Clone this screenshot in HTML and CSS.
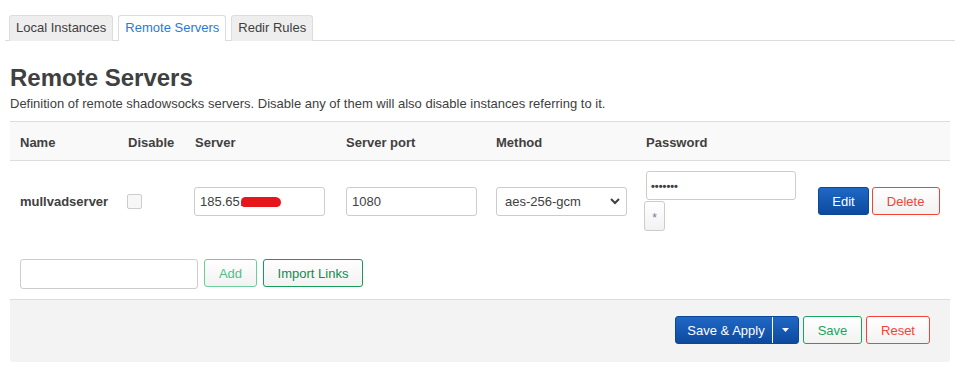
FILE: index.html
```html
<!DOCTYPE html>
<html lang="en">
<head>
    <meta charset="UTF-8">
    <title>Remote Servers</title>
    <link rel="stylesheet" href="styles.css">
</head>
<body>
    <div class="main">
        <ul class="tabs">
            <li class="tab">Local Instances</li>
            <li class="tab active">Remote Servers</li>
            <li class="tab">Redir Rules</li>
        </ul>

        <div class="section">
            <h2 class="section-title">Remote Servers</h2>
            <p class="section-descr">Definition of remote shadowsocks servers. Disable any of them will also disable instances referring to it.</p>

            <table class="cbi-table">
                <colgroup>
                    <col style="width: 108px">
                    <col style="width: 67px">
                    <col style="width: 151px">
                    <col style="width: 150px">
                    <col style="width: 150px">
                    <col style="width: 171px">
                    <col>
                </colgroup>
                <thead>
                    <tr>
                        <th>Name</th>
                        <th>Disable</th>
                        <th>Server</th>
                        <th>Server port</th>
                        <th>Method</th>
                        <th>Password</th>
                        <th></th>
                    </tr>
                </thead>
                <tbody>
                    <tr>
                        <td class="name">mullvadserver</td>
                        <td><input type="checkbox" class="check"></td>
                        <td>
                            <div class="field">
                                <span>185.65.</span><span class="redact"></span>
                            </div>
                        </td>
                        <td><input type="text" class="text" value="1080"></td>
                        <td>
                            <select class="select">
                                <option>aes-256-gcm</option>
                            </select>
                        </td>
                        <td>
                            <div class="pw">
                                <input type="text" class="text pw-input" value="•••••••">
                                <button class="btn btn-reveal">*</button>
                            </div>
                        </td>
                        <td class="actions">
                            <button class="btn btn-edit">Edit</button>
                            <button class="btn btn-delete">Delete</button>
                        </td>
                    </tr>
                </tbody>
            </table>

            <div class="create">
                <input type="text" class="text create-input">
                <button class="btn btn-add">Add</button>
                <button class="btn btn-import">Import Links</button>
            </div>
        </div>

        <div class="page-actions">
            <div class="split">
                <button class="btn btn-apply">Save &amp; Apply</button>
                <button class="btn btn-caret">
                    <svg width="7" height="4" viewBox="0 0 7 4"><path d="M0 0h7L3.5 4z" fill="#fff"/></svg>
                </button>
            </div>
            <button class="btn btn-save">Save</button>
            <button class="btn btn-reset">Reset</button>
        </div>
    </div>
</body>
</html>
```

FILE: styles.css
```css
* {
    margin: 0;
    padding: 0;
    box-sizing: border-box;
}

body {
    background: #fff;
    font-family: "Liberation Sans", Arial, sans-serif;
    font-size: 13px;
    color: #404040;
}

.main {
    width: 940px;
    margin-left: 10px;
    padding-top: 15px;
}

/* tabs */
.tabs {
    list-style: none;
    display: flex;
    gap: 5px;
    margin: 0 -5px;
    padding-left: 4px;
    border-bottom: 1px solid #ddd;
}

.tab {
    height: 26px;
    padding: 0 6px;
    line-height: 24px;
    background: #eee;
    border: 1px solid #ddd;
    border-bottom: none;
    border-radius: 3px 3px 0 0;
    color: #404040;
    margin-bottom: -1px;
}

.tab.active {
    background: #fff;
    color: #2a7ad5;
}

/* section */
.section-title {
    font-size: 24px;
    font-weight: bold;
    color: #404040;
    margin-top: 24px;
    line-height: 26px;
}

.section-descr {
    font-size: 13px;
    margin-top: 4px;
    line-height: 17px;
}

.cbi-table {
    width: 100%;
    border-collapse: collapse;
    table-layout: fixed;
    margin-top: 9px;
}

.cbi-table th {
    background: #f9f9f9;
    border-top: 1px solid #ddd;
    border-bottom: 1px solid #ddd;
    height: 39px;
    padding: 2px 10px 0;
    text-align: left;
    font-weight: bold;
    color: #404040;
}

.cbi-table td {
    padding: 10px 10px;
    height: 80px;
    vertical-align: middle;
}

.cbi-table td.name {
    font-weight: bold;
}

.check {
    appearance: none;
    display: block;
    width: 15px;
    height: 15px;
    border: 1px solid #ccc;
    border-radius: 2px;
    background: #f7f7f7;
    margin-left: -1px;
}

.text,
.field,
.select {
    display: block;
    width: 131px;
    height: 29px;
    border: 1px solid #ccc;
    border-radius: 3px;
    background: #fff;
    font-family: inherit;
    font-size: 13px;
    color: #404040;
    padding: 0 5px;
}

.field {
    display: flex;
    align-items: center;
    margin-left: -1px;
    padding-top: 1px;
}

.redact {
    display: inline-block;
    width: 40px;
    height: 10px;
    border-radius: 5px 6px 5px 4px;
    background: #e5171c;
    margin-left: -2px;
}

.select {
    appearance: none;
    padding: 0 4px 0 8px;
    background-image: url("data:image/svg+xml;utf8,<svg xmlns='http://www.w3.org/2000/svg' width='10' height='7' viewBox='0 0 10 7'><path d='M1 1l4 4 4-4' fill='none' stroke='%23404040' stroke-width='2'/></svg>");
    background-repeat: no-repeat;
    background-position: right 6px center;
}

.pw {
    display: flex;
    flex-direction: column;
    align-items: flex-start;
}

.pw-input {
    width: 150px;
    font-size: 11px;
    font-weight: bold;
    padding: 0 4px;
}

.btn {
    font-family: inherit;
    font-size: 13px;
    height: 28px;
    padding: 0 10px;
    border: 1px solid #ccc;
    border-radius: 3px;
    background: linear-gradient(#fff, #f2f2f2);
    color: #404040;
    cursor: pointer;
}

.btn-reveal {
    width: 21px;
    height: 30px;
    padding: 4px 0 0;
    margin-left: -2px;
    margin-top: 1px;
    color: #6b7ea0;
    font-size: 12px;
}

.actions {
    white-space: nowrap;
    padding-left: 11px !important;
}

.btn-edit {
    width: 51px;
    height: 28px;
    background: linear-gradient(#1f68c6, #0d4a9e);
    border-color: #0c4796;
    color: #fff;
}

.btn-delete {
    width: 68px;
    height: 28px;
    margin-left: -1px;
    border-color: #f44336;
    color: #f44336;
}

/* create row */
.create {
    display: flex;
    gap: 6px;
    padding: 18px 0 10px 10px;
}

.create-input {
    width: 178px;
    height: 30px;
}

.btn-add {
    width: 53px;
    border-color: #6ccf9b;
    color: #4cbf86;
}

.btn-import {
    width: 100px;
    border-color: #169c58;
    color: #138a4e;
}

/* footer */
.page-actions {
    display: flex;
    justify-content: flex-end;
    align-items: center;
    gap: 4px;
    height: 63px;
    padding: 0 20px 2px 0;
    background: #f3f3f3;
    border-top: 1px solid #ddd;
    border-radius: 0 0 3px 3px;
}

.split {
    display: flex;
    height: 28px;
    border-radius: 3px;
    overflow: hidden;
    background: linear-gradient(#1f68c6, #0d4a9e);
    border: 1px solid #0c4796;
}

.btn-apply,
.btn-caret {
    border: none;
    border-radius: 0;
    background: transparent;
    color: #fff;
    height: 26px;
}

.btn-apply {
    width: 97px;
    padding: 0 0 0 4px;
    border-right: 1px solid #fff;
}

.btn-caret {
    width: 25px;
    padding: 0;
    display: flex;
    align-items: center;
    justify-content: center;
}

.btn-save {
    width: 59px;
    border-color: #18a55d;
    color: #18a55d;
}

.btn-reset {
    width: 64px;
    border-color: #f44336;
    color: #f44336;
}
```
